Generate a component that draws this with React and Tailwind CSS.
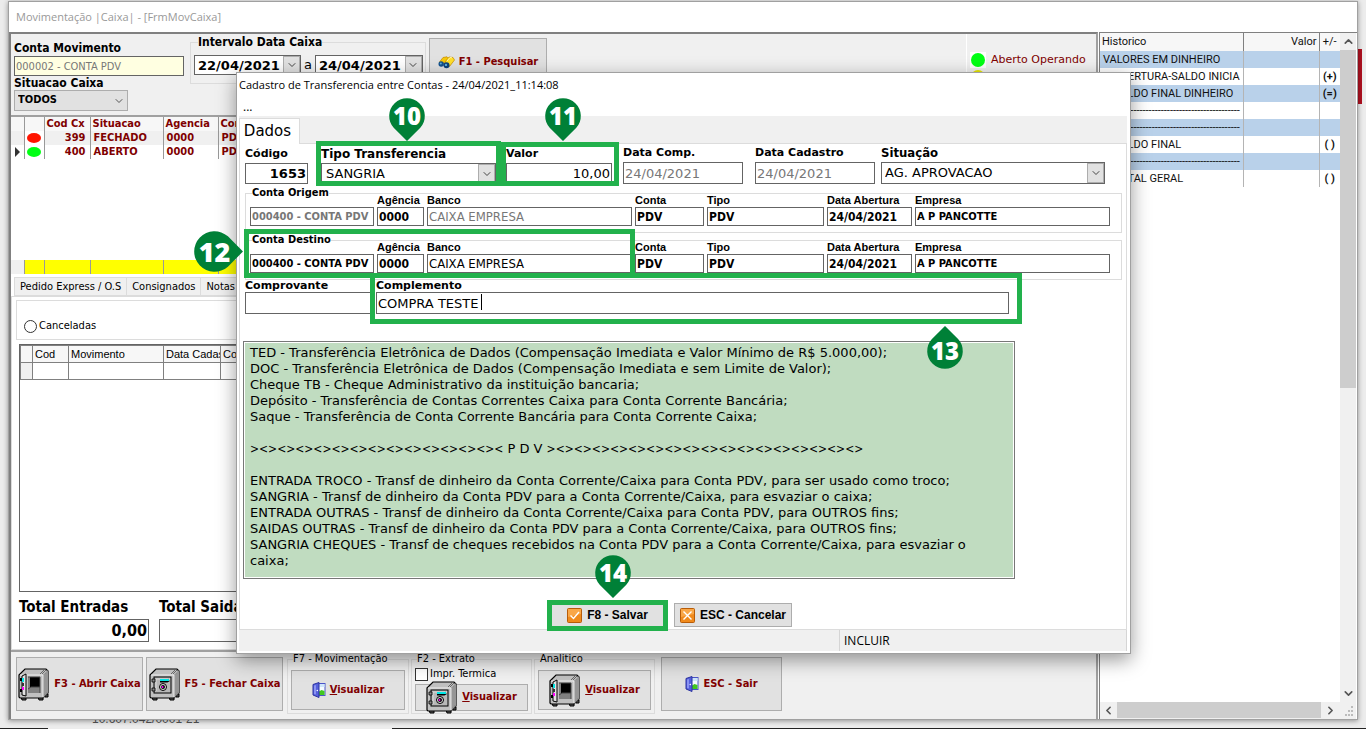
import { ChevronDown, ChevronLeft, ChevronRight, ChevronUp } from "lucide-react";
import clsx from "clsx";

const verdana = "font-['DejaVu_Sans',Verdana,sans-serif]";
const tahoma = "font-['DejaVu_Sans_Condensed','DejaVu_Sans',Tahoma,sans-serif]";
const segoe = "font-['Open_Sans','Segoe_UI',sans-serif]";
const arial = "font-['Liberation_Sans',Arial,sans-serif]";
const roboto = "font-[Roboto,sans-serif]";

const historico = [
  { text: "VALORES EM DINHEIRO", sign: "" },
  { text: "    ABERTURA-SALDO INICIA", sign: "(+)" },
  { text: "    SALDO FINAL DINHEIRO", sign: "(=)" },
  { text: "---------------------------------------------", sign: "" },
  { text: "---------------------------------------------", sign: "" },
  { text: "    SALDO FINAL", sign: "( )" },
  { text: "---------------------------------------------", sign: "" },
  { text: "    TOTAL GERAL", sign: "( )" },
];

const caixas = [
  { cod: "399", situacao: "FECHADO", agencia: "0000", conta: "PDV", color: "bg-[#ff1400]", current: false },
  { cod: "400", situacao: "ABERTO", agencia: "0000", conta: "PDV", color: "bg-[#00ff14]", current: true },
];

const ajudaBanco = `TED - Transferência Eletrônica de Dados (Compensação Imediata e Valor Mínimo de R$ 5.000,00);
DOC - Transferência Eletrônica de Dados (Compensação Imediata e sem Limite de Valor);
Cheque TB - Cheque Administrativo da instituição bancaria;
Depósito - Transferência de Contas Correntes Caixa para Conta Corrente Bancária;
Saque - Transferência de Conta Corrente Bancária para Conta Corrente Caixa;`;

const ajudaPdv = `ENTRADA TROCO - Transf de dinheiro da Conta Corrente/Caixa para Conta PDV, para ser usado como troco;
SANGRIA - Transf de dinheiro da Conta PDV para a Conta Corrente/Caixa, para esvaziar o caixa;
ENTRADA OUTRAS - Transf de dinheiro da Conta Corrente/Caixa para Conta PDV, para OUTROS fins;
SAIDAS OUTRAS - Transf de dinheiro da Conta PDV para a Conta Corrente/Caixa, para OUTROS fins;
SANGRIA CHEQUES - Transf de cheques recebidos na Conta PDV para a Conta Corrente/Caixa, para esvaziar o caixa;`;

/* ---------- icons ---------- */

function SafeBody({ children }) {
  return (
    <svg width="32" height="33" viewBox="0 0 32 33" className="shrink-0" aria-hidden="true">
      <path d="M3 29h5v3H4zM20 29h5v3h-4zM26 26h4v3h-3z" fill="#555" stroke="#000" />
      <path d="M1 7 7 1h21l2 2v22l-5 5H2l-1-1z" fill="#c0c0c0" stroke="#000" strokeWidth="1.2" />
      <path d="M25 7l5-5v23l-5 5z" fill="#8c8c8c" />
      <path d="M2 7h23v22" fill="none" stroke="#eee" />
      <path d="M22 6l4-4M24 6l4-4" stroke="#666" />
      <path d="M27 6v20M29 4v20" stroke="#aaa" strokeWidth=".7" />
      {children}
    </svg>
  );
}

function SafeOpen() {
  return (
    <SafeBody>
      <rect x="10" y="9" width="12" height="16" fill="#808080" />
      <rect x="12" y="9" width="10" height="10" fill="#000" />
      <path d="M10 9h12v16M10 21l3-2h9" fill="none" stroke="#444" />
      <path d="M4 8l4-2v22l-4-1z" fill="#e2e2e2" stroke="#000" />
      <path d="M3 10v3M3 21v3" stroke="#000" strokeWidth="2" />
      <path d="M5 10v4" stroke="#00e5e5" strokeWidth="2" />
      <path d="M5 19v3" stroke="#f0f" strokeWidth="2" />
      <path d="M5 15v3" stroke="#333" strokeWidth="2" />
    </SafeBody>
  );
}

function SafeClosed() {
  return (
    <SafeBody>
      <rect x="5" y="9" width="17" height="16" fill="#b8b8b8" stroke="#000" />
      <path d="M7 23V11h14" fill="none" stroke="#ddd" />
      <path d="M3 11h3v3H3zM3 20h3v3H3z" fill="#888" stroke="#000" strokeWidth=".8" />
      <path d="M11 13h7l2-1" fill="none" stroke="#000" strokeWidth="3" />
      <path d="M11 12h9" stroke="#00e5e5" strokeWidth="2" />
      <circle cx="14" cy="19" r="3.500" fill="#ddd" stroke="#000" />
      <circle cx="14" cy="19" r="2" fill="#000" />
      <circle cx="13.500" cy="19" r="1" fill="#f0f" />
    </SafeBody>
  );
}

function Door() {
  return (
    <svg width="14" height="16" viewBox="0 0 14 16" className="shrink-0" aria-hidden="true">
      <rect x="6" y="1.500" width="7" height="12" fill="#f5fbff" stroke="#4a54c8" />
      <path d="M7 9.500l2.500-1.500 3 1v4H7z" fill="#41c81e" />
      <path d="M7 2h5.500v3H7z" fill="#cfe6fb" />
      <path d="M1 2.500 7 .5v15L1 13z" fill="#5560dc" stroke="#2c33a0" />
      <path d="M2 3.500 4 3v9.500l-2-.6z" fill="#8a93f2" />
      <circle cx="5.300" cy="8.500" r=".8" fill="#fff" />
    </svg>
  );
}

function Binoculars() {
  return (
    <svg width="17" height="13" viewBox="0 0 17 13" className="shrink-0" aria-hidden="true">
      <path d="M1.500 6 5 1.500 9 .8l2 2-5 5-4-1z" fill="#f6c80a" stroke="#c48a00" strokeWidth=".7" />
      <path d="M7 6l4-5 4 .5L16.500 4l-5 6.500-3-1z" fill="#ffdf2a" stroke="#c48a00" strokeWidth=".7" />
      <path d="M9 5l3-3.500 2 .3" fill="none" stroke="#fff6b0" />
      <circle cx="3.200" cy="8" r="2.700" fill="#12508c" />
      <circle cx="8.500" cy="9.300" r="3" fill="#0d4179" />
      <circle cx="2.800" cy="7.600" r="1" fill="#5fb2e0" />
      <circle cx="8" cy="8.900" r="1.200" fill="#5fb2e0" />
    </svg>
  );
}

function OrangeBox({ kind }) {
  return (
    <svg width="15" height="15" viewBox="0 0 15 15" className="shrink-0" aria-hidden="true">
      <rect x=".5" y=".5" width="14" height="14" rx="1" fill="#f08a1c" stroke="#b85c08" />
      <path d="M1 1h13v5L1 9z" fill="#f9a748" />
      <path
        d={kind === "check" ? "M3.500 7.500l3 3 5.500-6.500" : "M3.500 3.500l8 8M11.500 3.500l-8 8"}
        fill="none"
        stroke="#fff"
        strokeWidth="1.400"
      />
    </svg>
  );
}

/* ---------- small parts ---------- */

const pinTurn = { down: "", up: "rotate-180", right: "-rotate-90" };

// Numbered drop, its tip points to the highlighted field
function Pin({ n, dir = "down", large, className }) {
  return (
    <div className={clsx("absolute z-20", large ? "size-[41px]" : "size-[36px]", className)}>
      <svg viewBox="0 0 36 36" className={clsx("absolute inset-0 size-full overflow-visible", pinTurn[dir])} aria-hidden="true">
        <path d="M18 43 4.700 29.800A17.800 17.800 0 1 1 31.300 29.800Z" fill="#008037" />
      </svg>
      <span
        className={clsx(
          segoe,
          "relative flex size-full items-center justify-center font-extrabold leading-none text-white",
          large ? "text-[27px]" : "text-[24px]"
        )}
      >
        {n}
      </span>
    </div>
  );
}

function Mark({ className }) {
  return <div className={clsx("pointer-events-none absolute z-10 border-[5px] border-[#22b14c]", className)} />;
}

function Label({ id, className, children }) {
  return (
    <label htmlFor={id} className={clsx("block whitespace-nowrap font-bold", className)}>
      {children}
    </label>
  );
}

function Combo({ id, value, className, box }) {
  return (
    <div className={clsx("relative border border-[#646464] bg-white", box)}>
      <select id={id} defaultValue={value} className={clsx("block size-full appearance-none bg-transparent outline-none", className)}>
        <option>{value}</option>
      </select>
      <span className="pointer-events-none absolute inset-y-0 right-0 flex w-[17px] items-center justify-center border border-[#adadad] bg-[#e1e1e1]">
        <ChevronDown size={12} strokeWidth={2} color="#444" />
      </span>
    </div>
  );
}

const btn = "flex items-center justify-center border border-[#adadad] bg-[#e1e1e1]";

function ToolButton({ icon, className, children }) {
  return (
    <button type="button" className={clsx(btn, tahoma, "gap-1 whitespace-nowrap text-[11px] font-bold text-[#800000]", className)}>
      {icon}
      <span>{children}</span>
    </button>
  );
}

function Visualizar() {
  return (
    <>
      <span className="underline">V</span>isualizar
    </>
  );
}

/* ---------- main window ---------- */

function FilterBar() {
  return (
    <div className="flex h-[81px] shrink-0 bg-[#f0f0f0] pl-[3px]">
      <div className={clsx(tahoma, "w-[176px] pt-[7px]")}>
        <Label id="conta-mov" className="text-[12px] leading-[15px]">Conta Movimento</Label>
        <input
          id="conta-mov"
          readOnly
          defaultValue="000002 - CONTA PDV"
          className={clsx(tahoma, "block h-5 w-[170px] border border-[#646464] bg-[#ffffe1] px-px text-[11px] text-[#777]")}
        />
        <Label id="situacao-caixa" className="text-[12px] leading-[14px]">Situacao Caixa</Label>
        <div className="relative h-[21px] w-[114px] border border-[#adadad] bg-[#e1e1e1]">
          <select id="situacao-caixa" defaultValue="TODOS" className="block size-full appearance-none pl-[3px] text-[11px] font-bold outline-none">
            <option>TODOS</option>
          </select>
          <ChevronDown size={12} color="#555" className="pointer-events-none absolute right-[2px] top-1" />
        </div>
      </div>

      <fieldset className="h-[50px] w-[236px] border border-[#dcdcdc]">
        <legend className={clsx(tahoma, "ml-[7px] text-[12px] font-bold leading-[16px]")}>Intervalo Data Caixa</legend>
        <div className={clsx(verdana, "flex items-center gap-[3px] pl-[3px] pt-[5px] text-[13px]")}>
          <Combo id="data-ini" value="22/04/2021" box="h-5 w-[107px]" className="pl-[3px] text-[13px] font-bold" />
          <span>a</span>
          <Combo id="data-fim" value="24/04/2021" box="h-5 w-[108px]" className="pl-[3px] text-[13px] font-bold" />
        </div>
      </fieldset>

      <ToolButton icon={<Binoculars />} className="ml-[3px] mt-1 h-[48px] w-[118px]">F1 - Pesquisar</ToolButton>

      <div className={clsx(verdana, "ml-auto w-[130px] border-l border-white pl-[3px] pt-[18px] text-[11px] text-[#800000]")}>
        <div className="flex items-center gap-[5px]">
          <span className="flex size-[16px] items-center justify-center bg-white">
            <span className="size-[14px] rounded-full bg-[#00ff14]" />
          </span>
          Aberto Operando
        </div>
        <span className="flex size-[16px] items-center justify-center">
          <span className="size-[14px] rounded-full bg-[#e6e600]" />
        </span>
      </div>
    </div>
  );
}

function CaixasTable() {
  const line = "border-l border-[#999]";
  return (
    <table className={clsx(tahoma, "h-[159px] w-full shrink-0 table-fixed border-collapse border-t-2 border-[#a0a0a0] bg-white text-[11px] font-bold leading-[14px] text-[#800000]")}>
      <colgroup>
        <col className="w-[13px]" />
        <col className="w-[20px]" />
        <col className="w-[46px]" />
        <col className="w-[73px]" />
        <col className="w-[55px]" />
        <col />
      </colgroup>
      <thead>
        <tr className="h-[14px] bg-[#f7f7f7] text-left">
          <th />
          <th className={line} />
          <th className={clsx(line, "pl-[2px]")}>Cod Cx</th>
          <th className={clsx(line, "pl-[2px]")}>Situacao</th>
          <th className={clsx(line, "pl-[2px]")}>Agencia</th>
          <th className={clsx(line, "pl-[2px]")}>Conta</th>
        </tr>
      </thead>
      <tbody>
        {caixas.map((c) => (
          <tr key={c.cod} className={clsx("h-[14px]", !c.current && "bg-[#f0f0f0]")}>
            <td>
              {c.current && (
                <svg width="6" height="10" viewBox="0 0 6 10" className="ml-1" aria-hidden="true">
                  <path d="M0 0l5 5-5 5z" fill="#333" />
                </svg>
              )}
            </td>
            <td className={clsx(line, "bg-white")}>
              <div className={clsx("mx-auto h-[10px] w-[14px] rounded-[50%]", c.color)} />
            </td>
            <td className={clsx(line, "pr-1 text-right")}>{c.cod}</td>
            <td className={clsx(line, "pl-[3px]")}>{c.situacao}</td>
            <td className={clsx(line, "pl-[3px]")}>{c.agencia}</td>
            <td className={clsx(line, "pl-[3px]")}>{c.conta}</td>
          </tr>
        ))}
        <tr><td colSpan={6} /></tr>
      </tbody>
      <tfoot>
        <tr className="h-[14px] bg-[#ff0]">
          <td className="bg-[#f0f0f0]" />
          <td className={line} />
          <td className={line} />
          <td className={line} />
          <td className={line} />
          <td className={line} />
        </tr>
      </tfoot>
    </table>
  );
}

function Lancamentos() {
  const cell = "border border-[#808080] pl-[2px] text-left font-normal";
  const total = "mt-[2px] block h-[23px] w-full border border-[#646464] px-px text-right text-[16px] font-bold";
  return (
    <div className="flex min-h-0 flex-1 flex-col bg-white">
      <div className={clsx(tahoma, "mt-[3px] flex h-[19px] pl-[3px] text-[11px]")}>
        {["Pedido Express / O.S", "Consignados", "Notas Fiscais"].map((t) => (
          <button key={t} type="button" className="whitespace-nowrap border border-r-0 border-[#dcdcdc] bg-[#f0f0f0] px-[5px] leading-[17px]">{t}</button>
        ))}
      </div>
      <div className="flex min-h-0 flex-1 flex-col border border-[#dcdcdc] px-1 pt-[3px]">
        <div className="flex h-[40px] items-end border border-[#dcdcdc] px-[7px] pb-[6px]">
          <label className={clsx(tahoma, "flex items-center gap-[2px] text-[11px] leading-[14px]")}>
            <input type="radio" name="filtro" className="size-[13px] appearance-none rounded-full border border-[#333] bg-white" />
            Canceladas
          </label>
        </div>
        <div className="mx-[3px] mt-1 min-h-0 flex-1 border border-[#646464]">
          <table className={clsx(arial, "w-full table-fixed border-collapse text-[11px] leading-[15px]")}>
            <colgroup>
              <col className="w-[12px]" />
              <col className="w-[36px]" />
              <col className="w-[95px]" />
              <col className="w-[57px]" />
              <col />
            </colgroup>
            <thead>
              <tr className="h-[17px] bg-[#f7f7f7]">
                <th className={cell} />
                <th className={cell}>Cod</th>
                <th className={cell}>Movimento</th>
                <th className={clsx(cell, "overflow-hidden whitespace-nowrap")}>Data Cadas</th>
                <th className={cell}>Conta</th>
              </tr>
            </thead>
            <tbody>
              <tr className="h-[17px]">
                <td className={clsx(cell, "bg-[#f0f0f0]")} />
                <td className={cell} />
                <td className={cell} />
                <td className={cell} />
                <td className={cell} />
              </tr>
            </tbody>
          </table>
        </div>
        <div className={clsx(tahoma, "flex gap-[10px] px-[3px] pb-[7px] pt-[5px]")}>
          <div className="w-[130px]">
            <Label id="entradas" className="text-[15px] leading-[20px]">Total Entradas</Label>
            <input id="entradas" readOnly defaultValue="0,00" className={total} />
          </div>
          <div className="w-[130px]">
            <Label id="saidas" className="text-[15px] leading-[20px]">Total Saidas</Label>
            <input id="saidas" readOnly defaultValue="" className={total} />
          </div>
        </div>
      </div>
    </div>
  );
}

function BottomBar() {
  const group = "flex h-[62px] flex-col border border-[#dcdcdc] px-[3px] pb-[3px]";
  const legend = clsx(tahoma, "ml-[2px] text-[11px] leading-[14px]");
  return (
    <div className="flex h-[69px] shrink-0 items-start border-t-2 border-[#a0a0a0] bg-[#f0f0f0] pl-[5px]">
      <ToolButton icon={<SafeOpen />} className="mt-[5px] h-[54px] w-[127px]">F3 - Abrir Caixa</ToolButton>
      <ToolButton icon={<SafeClosed />} className="ml-[3px] mt-[5px] h-[54px] w-[137px]">F5 - Fechar Caixa</ToolButton>
      <fieldset className={clsx(group, "ml-1 w-[122px]")}>
        <legend className={legend}>F7 - Movimentação</legend>
        <ToolButton icon={<Door />} className="mt-1 h-[41px] w-full">
          <Visualizar />
        </ToolButton>
      </fieldset>
      <fieldset className={clsx(group, "ml-[2px] w-[121px]")}>
        <legend className={legend}>F2 - Extrato</legend>
        <label className={clsx(tahoma, "flex items-center gap-[2px] pt-px text-[11px] leading-[14px]")}>
          <input type="checkbox" className="size-[13px] appearance-none border border-[#333] bg-white" />
          Impr. Termica
        </label>
        <ToolButton icon={<SafeClosed />} className="mt-[3px] h-[27px] w-full">
          <Visualizar />
        </ToolButton>
      </fieldset>
      <fieldset className={clsx(group, "ml-[2px] w-[121px]")}>
        <legend className={legend}>Analitico</legend>
        <ToolButton icon={<SafeOpen />} className="mt-1 h-[41px] w-full">
          <Visualizar />
        </ToolButton>
      </fieldset>
      <ToolButton icon={<Door />} className="ml-[6px] mt-[5px] h-[54px] w-[121px]">ESC - Sair</ToolButton>
    </div>
  );
}

function HistoricoPanel() {
  return (
    <div className="flex w-[258px] shrink-0 flex-col border-l border-t border-[#808080] bg-white pr-px">
      <div className="flex min-h-0 flex-1">
        <div className="min-w-0 flex-1">
          <table className={clsx(roboto, "w-full table-fixed border-collapse text-[11px] leading-[16px] text-[#111]")}>
            <colgroup>
              <col />
              <col className="w-[76px]" />
              <col className="w-[21px]" />
            </colgroup>
            <thead>
              <tr className="h-[18px] bg-[#f7f7f7]">
                <th className="pl-[2px] text-left font-normal">Historico</th>
                <th className="border-x border-[#808080] pr-[2px] text-right font-normal">Valor</th>
                <th className="font-normal">+/-</th>
              </tr>
            </thead>
            <tbody>
              {historico.map((h, i) => (
                <tr key={i} className={clsx("h-[17px]", i % 2 === 0 && "bg-[#b9d1ea]")}>
                  <td className="overflow-hidden whitespace-pre pl-[3px]">{h.text}</td>
                  <td className="border-x border-[#b4b4b4]" />
                  <td className="text-center font-bold">{h.sign}</td>
                </tr>
              ))}
            </tbody>
          </table>
        </div>
        <div className="flex w-[16px] flex-col items-center bg-[#f0f0f0]">
          <ChevronUp size={13} strokeWidth={3} color="#555" className="my-[2px]" />
          <div className="h-[338px] w-full bg-[#cdcdcd]" />
          <ChevronDown size={13} strokeWidth={3} color="#555" className="mb-[2px] mt-auto" />
        </div>
      </div>
      <div className="flex h-[17px] items-center bg-[#f0f0f0] pb-px">
        <ChevronLeft size={13} strokeWidth={3} color="#555" className="mx-[2px]" />
        <div className="h-full flex-1 bg-[#cdcdcd]" />
        <ChevronRight size={13} strokeWidth={3} color="#555" className="ml-[3px] mr-[2px]" />
        <svg width="17" height="16" viewBox="0 0 17 16" fill="#bbb" aria-hidden="true">
          <path d="M12 4h2v2h-2zM9 8h2v2H9zM12 8h2v2h-2zM6 12h2v2H6zM9 12h2v2H9zM12 12h2v2h-2z" />
        </svg>
      </div>
    </div>
  );
}

/* ---------- dialog ---------- */

const small = clsx(tahoma, "block h-[19px] border border-[#646464] bg-white px-px");
const big = clsx(verdana, "block border border-[#646464] bg-white px-px text-[13px]");

function ContaGroup({ prefix, title, dim }) {
  const cols = [
    { label: "Agência", value: "0000", w: "w-[47px]", text: "text-[12px] font-bold" },
    { label: "Banco", value: "CAIXA EMPRESA", w: "w-[205px]", text: clsx("text-[13px]", dim && "text-[#777]") },
    { label: "Conta", value: "PDV", w: "w-[69px]", text: "text-[12px] font-bold" },
    { label: "Tipo", value: "PDV", w: "w-[117px]", text: "text-[12px] font-bold" },
    { label: "Data Abertura", value: "24/04/2021", w: "w-[85px]", text: "text-[12px] font-bold" },
    { label: "Empresa", value: "A P PANCOTTE", w: "w-[195px]", text: "text-[11px] font-bold" },
  ];
  return (
    <fieldset className="mr-1 h-[47px] border border-[#dcdcdc] pl-1">
      <legend className={clsx(tahoma, "ml-[2px] text-[11px] font-bold leading-[14px]")}>
        <label htmlFor={prefix}>{title}</label>
      </legend>
      <div className="-mt-[7px] flex items-end gap-[3px]">
        <input
          id={prefix}
          readOnly
          defaultValue="000400 - CONTA PDV"
          className={clsx(small, "w-[124px] text-[11px] font-bold", dim && "text-[#777]")}
        />
        {cols.map((c, i) => (
          <div key={c.label} className={c.w}>
            <Label id={prefix + i} className={clsx(arial, "text-[11px] leading-[14px]")}>{c.label}</Label>
            <input id={prefix + i} readOnly defaultValue={c.value} className={clsx(small, "w-full", c.text)} />
          </div>
        ))}
      </div>
    </fieldset>
  );
}

function Dialog() {
  const label = clsx(verdana, "mb-[2px] text-[11px] leading-[14px]");
  return (
    <div
      role="dialog"
      aria-labelledby="dlg-title"
      className="absolute left-[236px] right-[235px] top-[72px] border border-[#a0a0a0] bg-white pb-[2px] pl-[2px] pr-[3px] shadow-[0_6px_18px_rgba(0,0,0,0.4)]"
    >
      <h2 id="dlg-title" className={clsx(segoe, "text-[11px] leading-[24px]")}>
        Cadastro de Transferencia entre Contas - 24/04/2021_11:14:08
      </h2>
      <div className={clsx(segoe, "h-[19px] pl-1 text-[12px] leading-[20px]")}>...</div>

      <div className="flex h-[27px] items-end bg-[#f0f0f0]">
        <button type="button" className={clsx(verdana, "z-10 -mb-px h-[26px] w-[61px] border border-b-0 border-[#dcdcdc] bg-white pr-1 text-[15px]")}>
          Dados
        </button>
      </div>

      <div className="border border-[#dcdcdc] pl-[5px] pt-[2px]">
        <div className="flex items-end">
          <div className="w-[63px]">
            <Label id="codigo" className={label}>Código</Label>
            <input id="codigo" readOnly defaultValue="1653" className={clsx(big, "h-[21px] w-full text-right font-bold")} />
          </div>
          <div className="relative ml-[13px] w-[175px]">
            <Label id="tipo" className={clsx(verdana, "mb-[2px] text-[12px] leading-[14px]")}>Tipo Transferencia</Label>
            <Combo id="tipo" value="SANGRIA" box="h-[21px] w-full" className={clsx(verdana, "pl-1 text-[13px]")} />
            <Mark className="-bottom-[2px] -left-[5px] -right-[5px] -top-[6px]" />
            <Pin n="10" className="-top-[49px] left-[68px]" />
          </div>
          <div className="relative ml-[10px] w-[106px]">
            <Label id="valor" className={label}>Valor</Label>
            <input id="valor" defaultValue="10,00" className={clsx(big, "h-[21px] w-full text-right")} />
            <Mark className="-bottom-[2px] -left-[5px] -right-[7px] -top-[5px]" />
            <Pin n="11" className="-top-[49px] left-[39px]" />
          </div>
          <div className="ml-[11px] w-[120px]">
            <Label id="comp" className={label}>Data Comp.</Label>
            <input id="comp" readOnly defaultValue="24/04/2021" className={clsx(big, "h-[22px] w-full text-[#777]")} />
          </div>
          <div className="ml-3 w-[120px]">
            <Label id="cad" className={label}>Data Cadastro</Label>
            <input id="cad" readOnly defaultValue="24/04/2021" className={clsx(big, "h-[22px] w-full text-[#777]")} />
          </div>
          <div className="ml-[6px] w-[224px]">
            <Label id="situacao" className={clsx(tahoma, "mb-[2px] text-[13px] leading-[14px]")}>Situação</Label>
            <Combo id="situacao" value="AG. APROVACAO" box="h-[22px] w-full" className={clsx(verdana, "pl-[3px] text-[13px]")} />
          </div>
        </div>

        <div className="mt-[2px]">
          <ContaGroup prefix="origem" title="Conta Origem" dim />
        </div>
        <div className="relative">
          <ContaGroup prefix="destino" title="Conta Destino" />
          <Mark className="-left-px -top-1 bottom-[2px] w-[391px]" />
          <Pin n="12" dir="right" large className="-left-[51px] -top-[2px]" />
        </div>

        <div className="relative -mt-px flex gap-[5px]">
          <div className="w-[126px]">
            <Label id="comprovante" className={clsx(verdana, "text-[11px] leading-[13px]")}>Comprovante</Label>
            <input id="comprovante" className={clsx(big, "h-[22px] w-full")} />
          </div>
          <div className="relative w-[633px]">
            <Label id="complemento" className={clsx(verdana, "text-[11px] leading-[13px]")}>Complemento</Label>
            <input id="complemento" defaultValue="COMPRA TESTE" className={clsx(big, "h-[22px] w-full")} />
            <span className="absolute bottom-1 left-[105px] h-4 w-px bg-black" />
            <Mark className="-bottom-[10px] -left-[6px] -right-[13px] -top-[6px]" />
            <Pin n="13" dir="up" className="-bottom-[55px] left-[551px]" />
          </div>
        </div>

        <div className="-ml-[2px] mt-[27px] w-[772px] border border-[#777] bg-white p-px">
          <div className={clsx(verdana, "bg-[#c0dcc0] px-[5px] pb-2 pt-[2px] text-[13px] leading-[16px]")}>
            <p className="whitespace-pre-wrap">{ajudaBanco}</p>
            <p className="my-4 h-4 whitespace-nowrap">
              <span className={clsx(tahoma, "text-[12px]")}>{"><".repeat(14)}</span>
              {" P D V "}
              <span className={clsx(tahoma, "text-[12px]")}>{"><".repeat(17) + ">"}</span>
            </p>
            <p className="whitespace-pre-wrap">{ajudaPdv}</p>
          </div>
        </div>

        <div className={clsx(arial, "mb-[2px] mt-[24px] flex justify-center gap-2 pr-[30px] text-[12px] font-bold")}>
          <div className="relative">
            <button type="button" className={clsx(btn, "h-[24px] w-[117px] gap-[5px]")}>
              <OrangeBox kind="check" />
              F8 - Salvar
            </button>
            <Mark className="-inset-x-[2px] -bottom-1 -top-[3px]" />
            <Pin n="14" className="-top-[48px] left-[46px]" />
          </div>
          <button type="button" className={clsx(btn, "h-[24px] w-[118px] gap-[5px]")}>
            <OrangeBox kind="x" />
            ESC - Cancelar
          </button>
        </div>
      </div>

      <div className={clsx(segoe, "flex h-[21px] bg-[#f0f0f0] text-[12px] leading-[21px]")}>
        <div className="w-[600px]" />
        <div className="flex-1 border-x border-[#d5d5d5] pl-1">INCLUIR</div>
      </div>
    </div>
  );
}

export default function App() {
  return (
    <div className="relative flex h-screen flex-col overflow-hidden bg-[#ececec] pt-px text-black">
      <div className="absolute right-1 top-[49px] h-[55px] w-1 bg-[#b01020]" />
      <main className="z-0 mx-2 flex min-h-0 flex-1 flex-col border border-[#a0a0a0] bg-white shadow-[0_1px_5px_rgba(0,0,0,0.4)]">
        <h1 className={clsx(segoe, "h-[30px] shrink-0 pl-[7px] text-[11px] leading-[29px] text-[#999]")}>
          Movimentação |Caixa| - [FrmMovCaixa]
        </h1>
        <div className="flex min-h-0 flex-1">
          <div className="mr-px flex min-w-0 flex-1 flex-col border-2 border-b-0 border-[#808080] border-r-[#a0a0a0]">
            <FilterBar />
            <CaixasTable />
            <Lancamentos />
            <BottomBar />
          </div>
          <HistoricoPanel />
        </div>
      </main>
      <Dialog />
      <footer className="flex h-[9px] shrink-0 items-end">
        <div className="h-px w-[48px] bg-[#222]" />
        <div className={clsx(arial, "flex h-[9px] w-[344px] items-end overflow-hidden pl-[44px] text-[12px] text-[#555]")}>
          <span className="pb-1 leading-[12px]">10.607.042/0001-21</span>
        </div>
        <div className="h-px flex-1 bg-[#222]" />
      </footer>
    </div>
  );
}
